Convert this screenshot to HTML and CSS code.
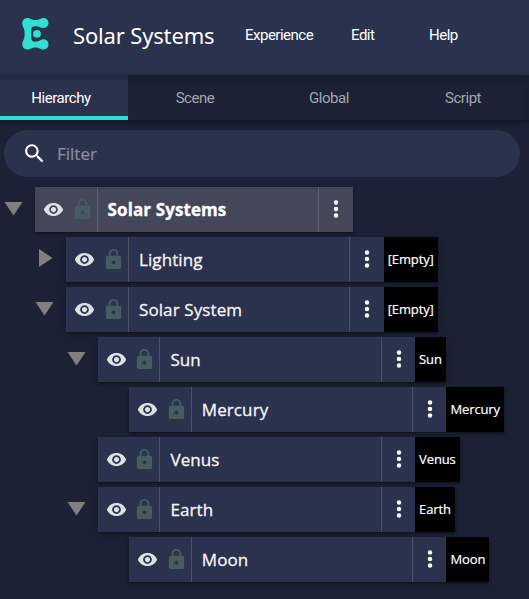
FILE: index.html
```
<!DOCTYPE html>
<html lang="en">
<head>
<meta charset="utf-8">
<title>Solar Systems</title>
<link rel="stylesheet" href="styles.css">
</head>
<body>
<svg class="defs" width="0" height="0">
  <symbol id="eye" viewBox="0 0 24 24"><path d="M12 4.5C7 4.5 2.73 7.61 1 12c1.73 4.39 6 7.5 11 7.5s9.27-3.11 11-7.5c-1.73-4.39-6-7.5-11-7.5zM12 17c-2.76 0-5-2.24-5-5s2.24-5 5-5 5 2.24 5 5-2.24 5-5 5zm0-8c-1.66 0-3 1.34-3 3s1.34 3 3 3 3-1.34 3-3-1.34-3-3-3z"/></symbol>
  <symbol id="lock" viewBox="0 0 24 24"><path d="M18 8h-1V6c0-2.76-2.24-5-5-5S7 3.24 7 6v2H6c-1.1 0-2 .9-2 2v10c0 1.100.9 2 2 2h12c1.1 0 2-.9 2-2V10c0-1.100-.9-2-2-2zm-6 9c-1.100 0-2-.9-2-2s.9-2 2-2 2 .9 2 2-.9 2-2 2zm3.100-9H8.900V6c0-1.710 1.390-3.100 3.100-3.100s3.100 1.390 3.100 3.100v2z"/></symbol>
  <symbol id="more" viewBox="0 0 24 24"><circle cx="12" cy="6" r="2.050"/><circle cx="12" cy="12" r="2.050"/><circle cx="12" cy="18" r="2.050"/></symbol>
</svg>
<header class="header">
  <svg class="logo" viewBox="0 0 30 36"><path d="M6.500 1C9 1 10 3 14.500 3S19.500 1 22.500 1C25.500 1 27.500 3.200 27.500 6S25.300 11 22.500 11C19 11 18.500 9.300 14.500 9.300C11.500 9.300 10.300 10.300 10.300 13V20.500C10.300 23.500 11.500 24.700 14.500 24.700C18.500 24.700 19 22.300 22.500 22.300C25.300 22.300 27.500 24.500 27.500 27.300S25.500 32.500 22.500 32.500C19.500 32.500 18.500 30.500 14.500 30.500S9 32.500 6.500 32.500C3.500 32.500 1.300 30.300 1.300 27.500C1.300 23.500 3.700 23 3.700 17S1.300 10 1.300 6C1.300 3.200 3.500 1 6.500 1Z"/><circle cx="16" cy="16.800" r="3.900"/></svg>
  <h1 class="title">Solar Systems</h1>
  <nav class="menu"><a class="experience">Experience</a><a class="edit">Edit</a><a class="help">Help</a></nav>
</header>
<nav class="tabs">
  <a class="tab active">Hierarchy</a><a class="tab">Scene</a><a class="tab">Global</a><a class="tab">Script</a>
</nav>
<label class="filter">
  <svg viewBox="0 0 24 24"><path d="M15.500 14h-.79l-.28-.27C15.410 12.590 16 11.110 16 9.500 16 5.910 13.090 3 9.500 3S3 5.910 3 9.500 5.910 16 9.500 16c1.610 0 3.090-.59 4.230-1.570l.27.28v.79l5 4.990L20.490 19l-4.990-5zm-6 0C7.010 14 5 11.990 5 9.500S7.010 5 9.500 5 14 7.010 14 9.500 11.990 14 9.500 14z"/></svg>
  <span>Filter</span>
</label>
<main class="tree" id="tree"></main>
<script src="tree.js"></script>
</body>
</html>
```
FILE: styles.css
```
* { box-sizing: border-box; }
body {
  margin: 0;
  height: 599px;
  overflow: hidden;
  background: #1c2136;
  color: #fff;
  font-family: "Open Sans", "Noto Sans", sans-serif;
}
.defs { position: absolute; }
svg { display: block; flex: none; fill: currentColor; }

.header { display: flex; height: 75px; background: #2b324d; }
.logo { width: 30px; height: 36px; margin: 17px 0 0 21px; color: #31dfd2; }
.title { margin: 20px 0 0 22px; width: 171px; font: 400 22px/31px "Noto Sans", sans-serif; letter-spacing: -0.160px; white-space: nowrap; }
.menu { display: flex; padding-top: 24px; font: 15px/22px Roboto, sans-serif; letter-spacing: -0.500px; }
.experience { width: 107px; padding-left: 1px; }
.edit { width: 77px; }
.help { padding-left: 1px; }

.tabs { display: flex; height: 45px; margin-left: -6px; width: 536px; background: #1c2136; box-shadow: inset 0 6px 6px -3px #14192a, 0 2px 5px #111522; }
.tab { width: 134px; height: 45px; text-align: center; font: 15px/46px Roboto, sans-serif; letter-spacing: -0.450px; color: #a4a6af; }
.tab.active { color: #fff; background: linear-gradient(#20263c, #2b324d 7px); border-bottom: 4px solid #31dfd2; }

.filter { display: flex; align-items: center; width: 516px; height: 47px; margin: 10px 0 0 4px; padding-left: 18px; border-radius: 24px; background: #2b324d; color: #8b8f9d; font-size: 17px; -webkit-text-stroke: 0.200px; }
.filter svg { width: 25px; height: 25px; margin-right: 10px; color: #fff; }

.tree { display: flex; flex-direction: column; gap: 5px; padding-top: 10px; }
.node { display: flex; height: 45px; }
.toggle { width: 35.100px; padding: 15px 0 0 4px; color: #808080; flex: none; }
.toggle svg { width: 19px; height: 14px; }
.toggle .closed { width: 14px; height: 18px; margin: -3px 0 0 4px; }
.row { display: flex; height: 45px; background: #2b324d; box-shadow: 0 2px 3px #10141f; }
.selected .row { background: #434759; }
.states { display: flex; width: 62.500px; padding: 0 0 1px 8px; align-items: center; gap: 7px; border-right: 1px solid #4a4f65; color: #dce2e6; }
.selected .states, .selected .more { border-color: #5c6072; }
.states svg { width: 21px; height: 21px; }
.states .lock { width: 23px; height: 23px; margin-left: -0.500px; color: #485a62; }
.name { width: 220.500px; padding-left: 10px; font-size: 17px; line-height: 45px; letter-spacing: 0.100px; -webkit-text-stroke: 0.300px; color: #f5f5f5; white-space: nowrap; }
.selected .name { font-weight: 700; color: #fff; }
.more { display: flex; align-items: center; width: 34.200px; padding: 0 0 1px 4px; border-left: 1px solid #4a4f65; }
.selected .more { width: 35px; }
.more svg { width: 26px; height: 26px; }
.tag { padding: 0 4px; background: #000; font-size: 13px; line-height: 45px; letter-spacing: -0.120px; -webkit-text-stroke: 0.200px; white-space: nowrap; }
```
FILE: tree.js
```
const nodes = [
  { name: "Solar Systems", depth: 0, toggle: "open", selected: true },
  { name: "Lighting", depth: 1, toggle: "closed", tag: "[Empty]" },
  { name: "Solar System", depth: 1, toggle: "open", tag: "[Empty]" },
  { name: "Sun", depth: 2, toggle: "open", tag: "Sun" },
  { name: "Mercury", depth: 3, tag: "Mercury" },
  { name: "Venus", depth: 2, tag: "Venus" },
  { name: "Earth", depth: 2, toggle: "open", tag: "Earth" },
  { name: "Moon", depth: 3, tag: "Moon" }
];
const arrows = {
  open: '<svg viewBox="0 0 19 14"><path d="M.5 0h18L9.500 13.500z"/></svg>',
  closed: '<svg class="closed" viewBox="0 0 14 18"><path d="M0 0v18L13.500 9z"/></svg>'
};
document.getElementById("tree").innerHTML = nodes.map(n => `
  <div class="node${n.selected ? " selected" : ""}" style="padding-left:${n.depth * 31.4}px">
    <div class="toggle">${arrows[n.toggle] || ""}</div>
    <div class="row">
      <div class="states"><svg><use href="#eye"/></svg><svg class="lock"><use href="#lock"/></svg></div>
      <div class="name">${n.name}</div>
      <div class="more"><svg><use href="#more"/></svg></div>
      ${n.tag ? `<div class="tag">${n.tag}</div>` : ""}
    </div>
  </div>`).join("");
```
